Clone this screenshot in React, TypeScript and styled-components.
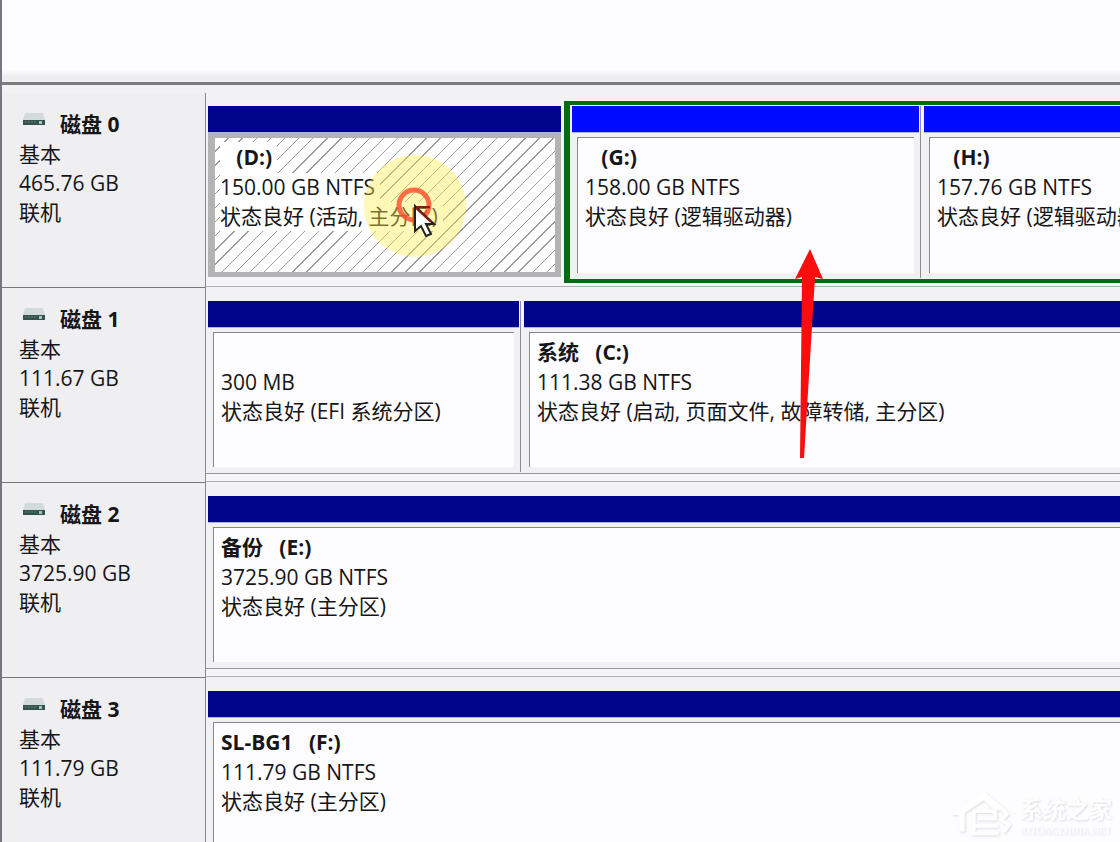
import React from "react";
import styled, { createGlobalStyle } from "styled-components";

const GlobalStyle = createGlobalStyle`
  * { box-sizing: border-box; }
  body {
    margin: 0;
    overflow: hidden;
    background: #f2f1f4;
    color: #161616;
    font: 21px/29px "Open Sans", "Noto Sans CJK SC", sans-serif;
  }
  h2, h3, p { margin: 0; font-size: inherit; font-weight: 400; }
`;

const Page = styled.main`
  position: relative;
  height: 100vh;
  overflow: hidden;
  border-left: 2px solid #77757c;
`;

const ListPane = styled.div`
  height: 85px;
  margin-bottom: 8px;
  background: linear-gradient(#fdfcff 70px, #eeedef 76px);
  border-bottom: 3px solid #7c7b7e;
`;

const DiskRow = styled.section`
  display: flex;
  height: 195px;
`;

const DiskLabel = styled.header`
  flex: 0 0 204px;
  padding: 16px 0 0 17px;
  background: #efeef1;
  border-right: 1px solid #8a898d;
  border-bottom: 1px solid #77767a;
`;

const DiskName = styled.h2`
  display: flex;
  align-items: center;
  gap: 14px;
  height: 31px;
  padding-left: 3px;
  && { font-weight: 700; }
`;

const DiskIcon = styled.svg`
  width: 24px;
  height: 16px;
  margin-bottom: 10px;
`;

const Volumes = styled.div<{ $extended?: boolean }>`
  display: flex;
  flex: 1;
  min-width: 0;
  height: 186px;
  padding: 13px 0 1px 2px;
  border-bottom: 1px solid ${(p) => (p.$extended ? "#f7f6f9" : "#98979b")};
  box-shadow: 0 7px 0 #f5f4f7, 0 8px 0 #b0afb3;
`;

const VolumeCell = styled.article<{ $width?: number }>`
  display: flex;
  flex-direction: column;
  flex: ${(p) => (p.$width ? `0 0 ${p.$width}px` : "1 0 0")};
  min-width: 0;
`;

const Stripe = styled.div<{ $logical?: boolean }>`
  height: 27px;
  background: ${(p) => (p.$logical ? "#000aff" : "#00048a")};
  border-bottom: 1px solid #a9b3e0;
`;

const VolumeBody = styled.div<{ $selected?: boolean; $open?: boolean }>`
  flex: 1;
  padding: ${(p) => (p.$selected ? "5px 6px 5px 7px" : "4px 5px 5px")};
  ${(p) => p.$open && "padding-right: 0;"}
  background: ${(p) => (p.$selected ? "#b3b2b5" : "#f1f0f3")};
`;

const VolumeInfo = styled.div<{ $selected?: boolean }>`
  height: 100%;
  padding: ${(p) => (p.$selected ? "4px 0 0 5px" : "4px 0 0 7px")};
  overflow: hidden;
  white-space: pre;
  background: ${(p) =>
    p.$selected
      ? "repeating-linear-gradient(135deg, #fff 0 9px, #9b9a9d 9px 10px)"
      : "#fdfcff"};
  border: solid #88868a;
  border-width: ${(p) => (p.$selected ? "0" : "1px 0 0 1px")};
`;

const VolumeTitle = styled.h3`
  height: 31px;
  line-height: 31px;
  && { font-weight: 700; }
`;

const VolumeLine = styled.p`
  height: 29px;
`;

const TextFill = styled.span<{ $selected?: boolean }>`
  display: inline-block;
  height: 100%;
  padding-right: 5px;
  background: ${(p) => (p.$selected ? "#fff" : "transparent")};
`;

const Divider = styled.div`
  flex: 0 0 5px;
  background: linear-gradient(90deg, #f1f0f3 1px, #8f8d93 1px 2px, #f1f0f3 2px);
`;

const Gap = styled.div`
  flex: 0 0 3px;
`;

const ExtendedPartition = styled.div`
  display: flex;
  flex: 1;
  min-width: 0;
  margin: -5px 0 -6px;
  padding: 1px 0 1px 2px;
  background: #f1f0f3;
  border: solid #046b12;
  border-width: 4px 0 4px 6px;
`;

const Pointer = styled.svg`
  position: absolute;
  top: 150px;
  left: 358px;
  width: 110px;
  height: 110px;
`;

const Arrow = styled.svg`
  position: absolute;
  top: 247px;
  left: 787px;
  width: 36px;
  height: 214px;
`;

const Watermark = styled.div`
  position: absolute;
  right: 8px;
  bottom: 3px;
  display: flex;
  align-items: center;
  gap: 2px;
  color: #fff;
  filter: drop-shadow(1px 1px 1px #dedce2);
`;

const WatermarkLogo = styled.svg`
  width: 70px;
  height: 50px;
`;

const WatermarkText = styled.div`
  display: flex;
  flex-direction: column;
  font: 700 23px/34px "Noto Sans CJK SC", sans-serif;
`;

const WatermarkSite = styled.span`
  font: 10px/12px "Liberation Serif", serif;
`;

type Volume = {
  name: string;
  size: string;
  status: string;
  width?: number;
  logical?: boolean;
  selected?: boolean;
};

type Disk = { name: string; size: string; volumes: Volume[]; extended?: Volume[] };

const disks: Disk[] = [
  {
    name: "磁盘 0",
    size: "465.76 GB",
    volumes: [
      { name: "   (D:)", size: "150.00 GB NTFS", status: "状态良好 (活动, 主分区)", width: 353, selected: true },
    ],
    extended: [
      { name: "   (G:)", size: "158.00 GB NTFS", status: "状态良好 (逻辑驱动器)", width: 347, logical: true },
      { name: "   (H:)", size: "157.76 GB NTFS", status: "状态良好 (逻辑驱动器)", logical: true },
    ],
  },
  {
    name: "磁盘 1",
    size: "111.67 GB",
    volumes: [
      { name: "", size: "300 MB", status: "状态良好 (EFI 系统分区)", width: 311 },
      { name: "系统   (C:)", size: "111.38 GB NTFS", status: "状态良好 (启动, 页面文件, 故障转储, 主分区)" },
    ],
  },
  {
    name: "磁盘 2",
    size: "3725.90 GB",
    volumes: [{ name: "备份   (E:)", size: "3725.90 GB NTFS", status: "状态良好 (主分区)" }],
  },
  {
    name: "磁盘 3",
    size: "111.79 GB",
    volumes: [{ name: "SL-BG1   (F:)", size: "111.79 GB NTFS", status: "状态良好 (主分区)" }],
  },
];

function VolumeView({ volume }: { volume: Volume }) {
  const { name, size, status, width, logical, selected } = volume;
  return (
    <VolumeCell $width={width}>
      <Stripe $logical={logical} />
      <VolumeBody $selected={selected} $open={!width}>
        <VolumeInfo $selected={selected}>
          <VolumeTitle><TextFill $selected={selected}>{name}</TextFill></VolumeTitle>
          <VolumeLine><TextFill $selected={selected}>{size}</TextFill></VolumeLine>
          <VolumeLine><TextFill $selected={selected}>{status}</TextFill></VolumeLine>
        </VolumeInfo>
      </VolumeBody>
    </VolumeCell>
  );
}

function VolumeList({ volumes }: { volumes: Volume[] }) {
  return (
    <>
      {volumes.map((volume, i) => (
        <React.Fragment key={volume.size}>
          {i > 0 && <Divider />}
          <VolumeView volume={volume} />
        </React.Fragment>
      ))}
    </>
  );
}

export default function App() {
  return (
    <Page>
      <GlobalStyle />
      <ListPane />
      {disks.map((disk) => (
        <DiskRow key={disk.name}>
          <DiskLabel>
            <DiskName>
              <DiskIcon viewBox="0 0 24 16" aria-hidden="true">
                <path d="M3 1h18l2 7H1z" fill="#d3dadb" />
                <path d="M1 8h22v5H1z" fill="#35534d" />
                <path d="M3 10h12" stroke="#62806f" strokeDasharray="2 1" />
                <path d="M17 9h3v3h-3z" fill="#9fc3c0" />
              </DiskIcon>
              {disk.name}
            </DiskName>
            <p>基本</p>
            <p>{disk.size}</p>
            <p>联机</p>
          </DiskLabel>
          <Volumes $extended={!!disk.extended}>
            <VolumeList volumes={disk.volumes} />
            {disk.extended && (
              <>
                <Gap />
                <ExtendedPartition>
                  <VolumeList volumes={disk.extended} />
                </ExtendedPartition>
              </>
            )}
          </Volumes>
        </DiskRow>
      ))}
      <Pointer viewBox="0 0 110 110" aria-hidden="true">
        <circle cx="55" cy="56" r="51" fill="#ffee50" fillOpacity="0.42" />
        <circle cx="54" cy="55" r="15" fill="none" stroke="#ff4a28" strokeOpacity="0.8" strokeWidth="5" />
        <path d="M55 56v25l6-5 5 10 5-2-5-10h8z" fill="#fff" stroke="#222" strokeWidth="2" />
        <path d="M56 57h14M56 58l15 14" stroke="#8a1a16" strokeWidth="2" />
      </Pointer>
      <Arrow viewBox="0 0 36 214" aria-hidden="true">
        <path d="M21 2l13 30-8-2-11 181h-4l2-181-7 2z" fill="#fb0d0d" />
      </Arrow>
      <Watermark>
        <WatermarkLogo viewBox="0 0 76 52" aria-hidden="true">
          <path d="M2 27L40 2l24 20H50L39 11 18 25v20h-6V27z" fill="currentColor" />
          <path d="M27 23h24v8H32M30 39h24M25 47h30M28 25v20M58 20l6 6-6 6 8 6-6 8" fill="none" stroke="currentColor" strokeWidth="4" />
        </WatermarkLogo>
        <WatermarkText>
          系统之家
          <WatermarkSite>XITONGZHIJIA.NET</WatermarkSite>
        </WatermarkText>
      </Watermark>
    </Page>
  );
}
